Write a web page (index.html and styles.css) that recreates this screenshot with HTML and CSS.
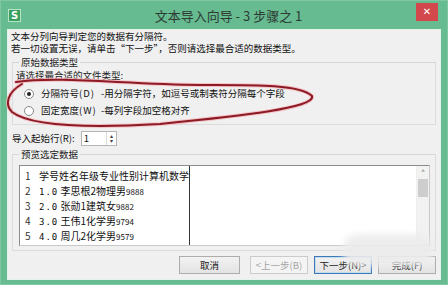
FILE: index.html
```html
<!DOCTYPE html>
<html lang="zh">
<head>
<meta charset="utf-8">
<link rel="stylesheet" href="styles.css">
</head>
<body>
<div class="window">
  <div class="titlebar">
    <div class="app-icon">S</div>
    <div class="title">文本导入向导 - 3 步骤之 1</div>
    <div class="close">&#x2715;</div>
  </div>
  <div class="client">
    <div class="intro">
      <div>文本分列向导判定您的数据有分隔符。</div>
      <div>若一切设置无误，请单击“下一步”，否则请选择最合适的数据类型。</div>
    </div>
    <div class="group g1">
      <div class="legend">原始数据类型</div>
      <div class="prompt">请选择最合适的文件类型:</div>
      <div class="radio-row r1">
        <span class="radio checked"></span>
        <span class="opt">分隔符号(<u>D</u>)</span>
        <span class="desc">-用分隔字符，如逗号或制表符分隔每个字段</span>
      </div>
      <div class="radio-row r2">
        <span class="radio"></span>
        <span class="opt">固定宽度(<u>W</u>)</span>
        <span class="desc">-每列字段加空格对齐</span>
      </div>
    </div>
    <div class="start-row">
      <span>导入起始行(<u>R</u>):</span>
      <div class="spin"><span class="spin-val">1</span><span class="spin-btn">&#x25B4;<br>&#x25BE;</span></div>
    </div>
    <div class="group g2">
      <div class="legend">预览选定数据</div>
      <div class="preview">
        <div class="num-col">
          <div class="row">1</div><div class="row">2</div><div class="row">3</div><div class="row">4</div><div class="row">5</div>
        </div>
        <div class="data-col">
          <div class="row">学号姓名年级专业性别计算机数学</div>
          <div class="row"><span class="n">1.0</span> 李思根2物理男<span class="s">9888</span></div>
          <div class="row"><span class="n">2.0</span> 张勋1建筑女<span class="s">9882</span></div>
          <div class="row"><span class="n">3.0</span> 王伟1化学男<span class="s">9794</span></div>
          <div class="row"><span class="n">4.0</span> 周几2化学男<span class="s">9579</span></div>
        </div>
        <div class="rest"></div>
        <div class="scrollbar"><div class="arrow">&#x02C4;</div><div class="thumb"></div></div>
      </div>
    </div>
    <div class="buttons">
      <div class="btn cancel">取消</div>
      <div class="btn disabled">&lt;上一步(<u>B</u>)</div>
      <div class="btn focus">下一步(<u>N</u>)&gt;</div>
      <div class="btn">完成(<u>F</u>)</div>
    </div>
  </div>
  <svg class="annot" width="448" height="285" viewBox="0 0 448 285">
    <path class="halo" d="M16 82 C60 76 120 84 200 85 C250 85 300 84 312 96 C316 108 240 116 160 124 C90 128 30 126 12 112 C4 104 8 92 22 84" />
    <path class="ink" d="M16 82 C60 76 120 84 200 85 C250 85 300 84 312 96 C316 108 240 116 160 124 C90 128 30 126 12 112 C4 104 8 92 22 84" />
  </svg>
  <div class="blob"></div>
</div>
</body>
</html>
```
FILE: styles.css
```css
* { box-sizing: border-box; }
html, body { margin: 0; padding: 0; }
body {
  width: 448px; height: 285px; overflow: hidden;
  font-family: "Noto Sans CJK SC", "Noto Sans", sans-serif;
  font-size: 9.5px; color: #111;
  background: #fff;
  white-space: nowrap;
}
.window {
  position: relative;
  width: 448px; height: 285px;
  background: #66bb90;
  border: 1px solid #7fc7a2;
  display: flex; flex-direction: column;
}
.titlebar {
  height: 28px; display: flex; align-items: center;
  padding-left: 7px; position: relative;
}
.app-icon {
  width: 13px; height: 13px; background: #3aa05f;
  border: 1px solid #b9e3c6;
  color: #fff; font-family: "DejaVu Sans", sans-serif; font-weight: bold;
  font-size: 10px; line-height: 11px; text-align: center;
}
.title {
  flex: 1; text-align: center; font-size: 13px; color: #2d3a33;
  margin-left: 20px;
}
.close {
  width: 22px; height: 18px; background: #d2484c; color: #fff;
  font-size: 10px; line-height: 18px; text-align: center;
  margin-right: 9px; margin-top: -6px;
  font-family: "DejaVu Sans", sans-serif;
}
.client {
  margin: 0 6px 4px 6px; flex: 1;
  background: #f0f0f0;
  border: 1px solid #e4f3ea;
  display: flex; flex-direction: column;
}
.intro { padding: 0 3px; line-height: 12px; }
.group {
  border: 1px solid #dcdcdc; border-top-color: #d5d5d5;
  margin: 0 4px; position: relative;
}
.legend {
  position: absolute; top: -7px; left: 6px; background: #f0f0f0;
  padding: 0 2px; line-height: 13px; color: #222;
}
.g1 { margin-top: 8px; height: 63px; padding: 6px 0 0 3px; }
.prompt { line-height: 13px; color: #222; }
.radio-row { display: flex; align-items: center; height: 17px; line-height: 13px; padding-left: 8px; }
.r1 { margin-top: 3px; }
.radio {
  width: 10px; height: 10px; border-radius: 50%;
  border: 1px solid #8a8a8a; background: #fff; position: relative;
  margin-right: 7px; flex: none;
}
.radio.checked::after {
  content: ""; position: absolute; left: 2px; top: 2px;
  width: 4px; height: 4px; border-radius: 50%; background: #222;
}
.opt { width: 60px; flex: none; }
.opt u { padding: 0 1px; }
.start-row { display: flex; align-items: center; height: 17px; line-height: 13px; margin-top: 5px; padding-left: 4px; }
.spin {
  margin-left: 6px; width: 36px; height: 15px; background: #fff;
  border: 1px solid #b5b5b5; display: flex; align-items: center;
}
.spin-val { flex: 1; padding-left: 2px; }
.spin-btn { width: 10px; font-size: 6px; line-height: 5px; text-align: center; color: #444; border-left: 1px solid #ddd; height: 13px; padding-top: 1px; }
.g2 { margin-top: 7px; height: 97px; padding: 10px 5px 0 6px; }
.preview {
  height: 81px; background: #fff;
  border: 1px solid #8c8c8c; border-right-color: #c9c9c9; border-bottom-color: #c9c9c9;
  display: flex; font-size: 10px;
}
.row { height: 15px; line-height: 15px; overflow: hidden; }
.num-col { width: 18px; padding-left: 5px; padding-top: 2px; color: #333; }
.data-col { width: 152px; border-right: 1px solid #333; padding-left: 1px; padding-top: 2px; }
.n { font-family: "DejaVu Sans Mono", monospace; font-size: 9px; letter-spacing: 1px; }
.s { font-size: 8px; }
.rest { flex: 1; }
.scrollbar { width: 13px; background: #f2f2f2; border-left: 1px solid #eee; }
.arrow { height: 11px; text-align: center; font-size: 11px; line-height: 14px; color: #333; }
.thumb { height: 18px; margin: 2px 1px 0 1px; background: #cdcdcd; }
.buttons {
  display: flex; justify-content: flex-end; margin-top: 5px; padding-right: 4px;
}
.btn {
  width: 58px; height: 18px; border: 1px solid #adadad;
  background: linear-gradient(#f2f2f2, #e3e3e3);
  text-align: center; line-height: 16px; color: #1a1a1a;
  margin-left: 6px;
}
.btn.cancel { width: 61px; margin-right: 4px; }
.btn.disabled { color: #a4a4a4; border-color: #cbcbcb; background: #f4f4f4; }
.btn.focus { border-color: #3d7ab5; box-shadow: inset 0 0 0 1px #c5dcf0; }
u { text-decoration: none; }
.annot { position: absolute; left: -1px; top: -1px; pointer-events: none; }
.annot path { fill: none; stroke-linecap: round; }
.halo { stroke: #f4b9bd; stroke-width: 4; opacity: 0.8; }
.ink { stroke: #8d1a24; stroke-width: 2; }
.blob {
  position: absolute; left: 342px; top: 233px; width: 90px; height: 32px;
  background: #ececec; border-radius: 14px; filter: blur(3px); opacity: 0.9;
}
```
